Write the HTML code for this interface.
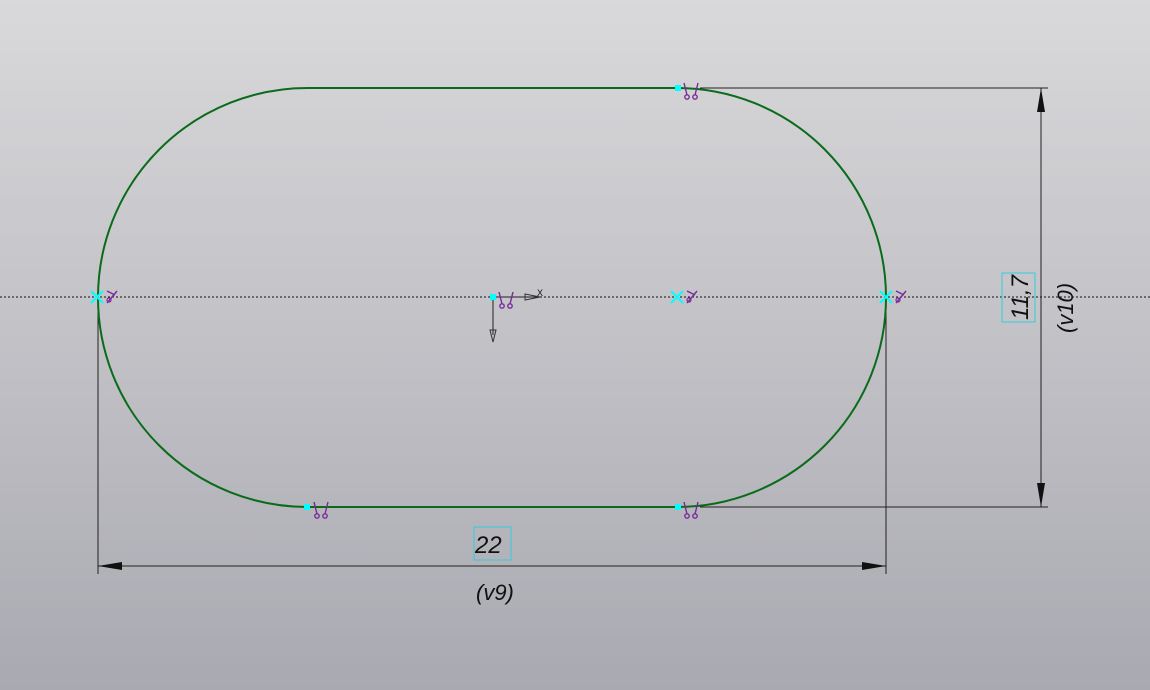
<!DOCTYPE html>
<html><head><style>
html,body{margin:0;padding:0}
body{width:1150px;height:690px;overflow:hidden;background:linear-gradient(#d9d9db,#a9a9b1)}
svg{position:absolute;left:0;top:0}
text{font-family:"Liberation Sans",sans-serif;font-style:italic;fill:#111}
</style></head><body>
<svg width="1150" height="690" viewBox="0 0 1150 690">
<defs>
<g id="c"><g stroke="#7a2a9a" stroke-width="1.4" fill="none">
<line x1="0" y1="-7" x2="3" y2="5"/><circle cx="3" cy="7" r="2.2"/>
<line x1="14" y1="-7" x2="11" y2="5"/><circle cx="11" cy="7" r="2.2"/></g></g>
<g id="x"><g stroke="#0ff" stroke-width="2"><line x1="-6" y1="-6" x2="6" y2="6"/><line x1="-6" y1="6" x2="6" y2="-6"/></g>
<line x1="10" y1="-6" x2="18" y2="-2" stroke="#7a2a9a" stroke-width="1.4"/><line x1="10" y1="6" x2="20" y2="-6" stroke="#7a2a9a" stroke-width="1.4"/><circle cx="12" cy="3" r="2" fill="none" stroke="#7a2a9a" stroke-width="1.2"/></g>
</defs>
<line x1="0" y1="297" x2="1150" y2="297" stroke="#111" stroke-width="1" stroke-dasharray="2,2"/>
<g stroke="#222" stroke-width="1" fill="none">
<line x1="700" y1="88" x2="1048" y2="88"/>
<line x1="700" y1="507" x2="1048" y2="507"/>
<line x1="1041" y1="88" x2="1041" y2="507"/>
<line x1="98" y1="300" x2="98" y2="574"/>
<line x1="886" y1="300" x2="886" y2="574"/>
<line x1="98" y1="566" x2="886" y2="566"/>
<line x1="493" y1="297" x2="493" y2="335"/>
<line x1="493" y1="297" x2="540" y2="297"/>
</g>
<g fill="#111">
<polygon points="1041,88 1037,112 1045,112"/>
<polygon points="1041,507 1037,483 1045,483"/>
<polygon points="98,566 122,562 122,570"/>
<polygon points="886,566 862,562 862,570"/>
</g>
<g fill="none" stroke="#333" stroke-width="1"><polygon points="525,294 540,297 525,300"/><polygon points="490,330 493,342 496,330"/></g>
<text x="537" y="296" font-size="9" style="font-style:normal">X</text>
<path d="M307.5,88 L676.5,88 A209.5,209.5 0 0 1 676.5,507 L307.5,507 A209.5,209.5 0 0 1 307.5,88 Z" fill="none" stroke="#0a6b1a" stroke-width="2"/>
<g fill="#0ff"><rect x="675" y="85" width="6" height="6"/><rect x="675" y="504" width="6" height="6"/><rect x="304" y="504" width="6" height="6"/><rect x="490" y="294" width="6" height="6"/></g>
<use href="#c" x="684" y="90"/><use href="#c" x="684" y="509"/><use href="#c" x="314" y="509"/><use href="#c" x="499" y="299"/>
<use href="#x" x="97" y="297"/><use href="#x" x="677" y="297"/><use href="#x" x="886" y="297"/>
<rect x="474" y="527" width="37" height="33" fill="none" stroke="#3cd" stroke-width="1"/>
<text x="475" y="553" font-size="24">22</text>
<text x="476" y="600" font-size="22">(v9)</text>
<rect x="1002" y="273" width="33" height="49" fill="none" stroke="#3cd" stroke-width="1"/>
<text transform="translate(1028,320) rotate(-90)" font-size="24">11,7</text>
<text transform="translate(1073,333) rotate(-90)" font-size="22">(v10)</text>
</svg>
</body></html>
